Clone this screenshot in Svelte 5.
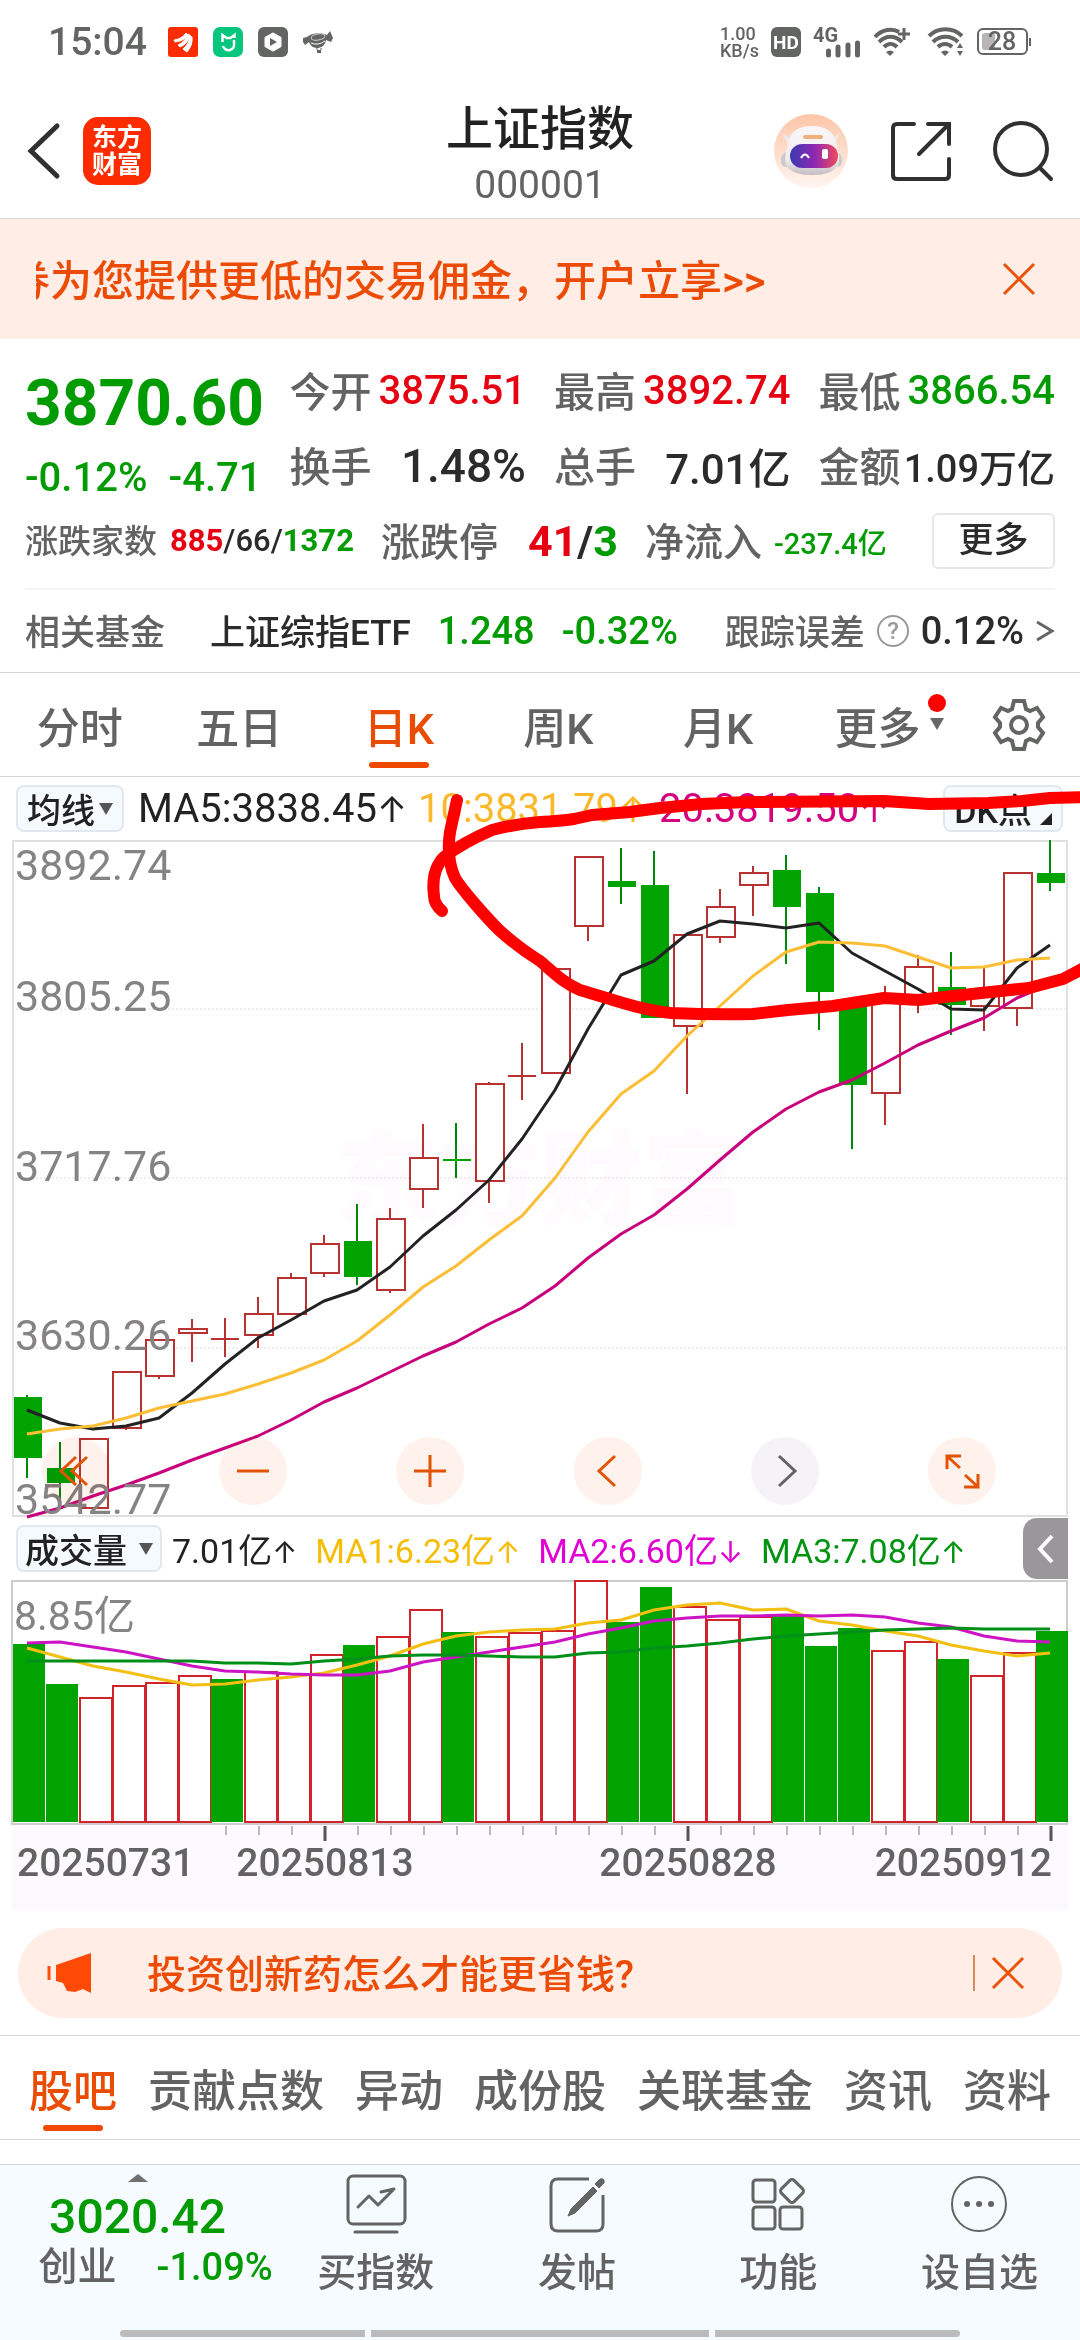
<script>
  const STEP = 33;
  const FIRST = 27;
  const cx = (i) => FIRST + STEP * i;

  // [rising, body top, body bottom, high, low]
  const candles = [
    [0, 1397, 1458, 1395, 1478], [0, 1468, 1483, 1442, 1501], [1, 1439, 1508, 1439, 1508], [1, 1372, 1428, 1372, 1430],
    [1, 1340, 1376, 1340, 1379], [1, 1329, 1333, 1319, 1362], [1, 1339, 1339, 1318, 1357], [1, 1314, 1335, 1297, 1348],
    [1, 1278, 1314, 1273, 1314], [1, 1244, 1273, 1235, 1277], [0, 1241, 1277, 1204, 1285], [1, 1219, 1290, 1208, 1293],
    [1, 1158, 1189, 1124, 1208], [0, 1159, 1159, 1123, 1178], [1, 1084, 1181, 1082, 1203], [1, 1076, 1076, 1043, 1100],
    [1, 969, 1073, 969, 1073], [1, 857, 926, 857, 941], [0, 881, 887, 848, 904], [0, 885, 1018, 851, 1018],
    [1, 935, 1026, 935, 1094], [1, 907, 937, 889, 943], [1, 873, 885, 866, 916], [0, 870, 907, 855, 964],
    [0, 893, 992, 887, 1030], [0, 1003, 1085, 1003, 1149], [1, 1000, 1093, 986, 1125], [1, 967, 998, 955, 1013],
    [0, 987, 1005, 952, 1035], [1, 993, 1006, 967, 1031], [1, 873, 1008, 873, 1026], [0, 873, 883, 840, 891]
  ];
  const ma5 = [1410, 1423, 1429, 1426, 1418, 1393, 1364, 1338, 1320, 1301, 1290, 1267, 1236, 1210, 1180, 1139, 1090, 1029, 975, 961, 934, 921, 924, 928, 923, 953, 971, 989, 1009, 1010, 968, 945];
  const ma10 = [1434, 1429, 1426, 1418, 1408, 1401, 1394, 1384, 1373, 1360, 1341, 1315, 1287, 1266, 1240, 1216, 1178, 1132, 1094, 1071, 1036, 1006, 976, 952, 942, 943, 946, 957, 968, 967, 960, 958];
  const ma20 = [1517, 1508, 1496, 1485, 1473, 1460, 1448, 1436, 1420, 1402, 1388, 1372, 1356, 1342, 1324, 1308, 1286, 1258, 1234, 1215, 1189, 1160, 1132, 1109, 1092, 1080, 1063, 1045, 1031, 1018, 998, 984];

  // [rising, bar top]
  const volumes = [
    [0, 1644], [0, 1684], [1, 1698], [1, 1686], [1, 1683], [1, 1676], [0, 1679], [1, 1672],
    [1, 1674], [1, 1655], [0, 1645], [1, 1637], [1, 1610], [0, 1632], [1, 1637], [1, 1633],
    [1, 1631], [1, 1581], [0, 1622], [0, 1587], [1, 1607], [1, 1620], [1, 1617], [0, 1615],
    [0, 1646], [0, 1628], [1, 1651], [1, 1642], [0, 1659], [1, 1676], [1, 1653], [0, 1631]
  ];
  const vma1 = [1648, 1657, 1666, 1672, 1679, 1685, 1684, 1680, 1677, 1673, 1665, 1656, 1644, 1636, 1632, 1630, 1629, 1623, 1620, 1610, 1605, 1603, 1610, 1609, 1621, 1625, 1631, 1636, 1645, 1651, 1656, 1653];
  const vma2 = [1643, 1642, 1647, 1652, 1659, 1666, 1671, 1672, 1674, 1675, 1675, 1671, 1662, 1657, 1652, 1647, 1642, 1634, 1628, 1621, 1618, 1616, 1616, 1615, 1616, 1615, 1617, 1623, 1627, 1636, 1641, 1642];
  const vma3 = [1661, 1661, 1661, 1661, 1661, 1661, 1663, 1663, 1664, 1661, 1659, 1656, 1655, 1655, 1656, 1657, 1657, 1653, 1652, 1648, 1646, 1643, 1639, 1636, 1634, 1632, 1630, 1629, 1628, 1629, 1629, 1629];

  const points = (series) => series.map((y, i) => `${cx(i)},${y}`).join(' ');

  const prices = [['3892.74', 880], ['3805.25', 1011], ['3717.76', 1181], ['3630.26', 1350], ['3542.77', 1514]];
  const ticks = Array.from({ length: 26 }, (_, k) => k + 6);
  const majors = [9, 20, 31];
  const periods = ['分时', '五日', '日K', '周K', '月K', '更多'];
  const sections = ['股吧', '贡献点数', '异动', '成份股', '关联基金', '资讯', '资料'];
</script>

<div class="page">
  <div class="status">
    <div class="side">
      <span class="clock">15:04</span>
      <svg class="app" viewBox="0 0 30 30"><rect width="30" height="30" rx="3" fill="#fc2d05" /><path d="M6 13Q14 12 18 6l2 2Q16 14 7 15zM10 18Q18 14 20 7l2 1Q20 17 12 20zM15 22Q21 17 22 9l2 1Q25 18 19 25z" fill="#fff" stroke="#fff" stroke-linejoin="round" /></svg>
      <svg class="app" viewBox="0 0 30 30"><rect width="30" height="30" rx="7" fill="#06c57c" /><path d="M9.500 15V8l4 3h4l4-3v3M21 13v3a5 5 0 0 1-11 3" fill="none" stroke="#fff" stroke-width="2.500" /></svg>
      <svg class="app" viewBox="0 0 30 30"><rect width="30" height="30" rx="6" fill="#636563" /><path d="M15 7l7 4v8l-7 4-7-4v-8z" fill="#fff" stroke="#fff" stroke-width="3" stroke-linejoin="round" /><path d="M12 11l7 4-7 4z" fill="#636563" /></svg>
      <svg class="app" viewBox="0 0 30 30"><path d="M0 11l4-1c4-4 14-5 20-2l3-4 3 7-2 4-5-2c-1 6-5 8-9 8s-7-3-8-6l-4 3-2-3z" fill="#636563" /><ellipse cx="15" cy="10" rx="7" ry="3" fill="none" stroke="#ccc" transform="rotate(-10 15 10)" /><path d="M8 16q7 3 14-2" stroke="#fff" fill="none" /><path d="M14 21v2M18 21v2" stroke="#636563" /><rect x="14" y="23" width="4" height="3" fill="#636563" /></svg>
    </div>
    <div class="side right">
      <span class="speed">1.00<br />KB/s</span>
      <svg class="app hd" viewBox="0 0 30 30"><rect width="30" height="30" rx="6" fill="#636563" /><text x="15" y="22" text-anchor="middle">HD</text></svg>
      <svg class="cell" viewBox="0 0 48 30"><text x="0" y="15">4G</text><path d="M15.500 24v4M25 20v8M35 18v10M44.500 16v12" stroke="#636563" stroke-width="5" stroke-linecap="round" /></svg>
      <svg class="wifi" viewBox="0 0 38 30"><g fill="none" stroke="#636563" stroke-width="4"><path d="M2 10C9 2 20 1 26 5" /><path d="M6 15c7-7 16-7 23 0M11 20c4-4 9-4 13 0" /></g><path d="M13 25q4-3 8 0l-4 4z" fill="#636563" /><path d="M31 1v12M25 7h12" stroke="#636563" stroke-width="3" /></svg>
      <svg class="wifi" viewBox="0 0 38 30"><g fill="none" stroke="#636563" stroke-width="4"><path d="M2 9c9-9 24-9 33 0M6 15c7-7 18-7 25 0M11 20c4-4 10-4 14 0" /></g><path d="M14 25q4-3 8 0l-4 4zM30 21l3-5 3 5zM30 24l3 5 3-5z" fill="#636563" /></svg>
      <svg class="battery" viewBox="0 0 55 28"><rect x="1" y="1" width="49" height="25" rx="5" fill="none" stroke="#636563" stroke-width="2" /><rect x="5" y="5" width="13" height="17" rx="3" fill="#b8b4b8" /><path d="M53 10v8" stroke="#636563" stroke-width="2" /><text x="25" y="22" text-anchor="middle">28</text></svg>
    </div>
  </div>

  <header class="header">
    <div class="lead">
      <button class="plain" aria-label="返回"><svg class="back" viewBox="0 0 34 56"><path d="M30 3L4 28l26 25" fill="none" stroke="#303030" stroke-width="5" stroke-linecap="round" /></svg></button>
      <div class="brand">东方<br />财富</div>
    </div>
    <div class="title"><h1>上证指数</h1><span>000001</span></div>
    <div class="tools">
      <button class="plain" aria-label="助手">
        <svg class="robot" viewBox="0 0 76 76">
          <defs>
            <linearGradient id="halo" x2="0" y2="1"><stop offset="0" stop-color="#fdc5a8" /><stop offset="1" stop-color="#fff5f0" /></linearGradient>
            <linearGradient id="visor"><stop offset="0" stop-color="#3b3bb0" /><stop offset=".5" stop-color="#8d27b4" /><stop offset="1" stop-color="#f24a5c" /></linearGradient>
            <linearGradient id="shell" x2="0" y2="1"><stop offset="0" stop-color="#faf7f8" /><stop offset=".7" stop-color="#efebee" /><stop offset="1" stop-color="#c4bdc4" /></linearGradient>
          </defs>
          <circle cx="38" cy="38" r="37" fill="url(#halo)" />
          <path d="M16 38q-7 1-8 8-1 8 6 8h8zM61 38q7 1 8 8 1 8-6 8h-8z" fill="#cfc9ce" />
          <path d="M9 20l4 8q3 5 9 0zM67 20l-4 8q-3 5-9 0z" fill="#eee9ec" />
          <path d="M14 36q1-23 25-23t25 23q4 8 1 16-5 10-26 10-21 0-26-10-2-8 1-16z" fill="url(#shell)" />
          <rect x="17" y="31" width="48" height="24" rx="12" fill="url(#visor)" />
          <rect x="30" y="22" width="20" height="4" rx="2" fill="#f0b07c" />
          <path d="M28 45q4-7 8 0" fill="none" stroke="#fff" stroke-width="2" /><rect x="49" y="36" width="6" height="10" rx="2" fill="#fff" />
        </svg>
      </button>
      <button class="plain" aria-label="分享"><svg class="share" viewBox="0 0 60 60"><g fill="none" stroke="#303030" stroke-width="4" stroke-linecap="round"><path d="M23 3H6q-4 0-4 4v47q0 4 4 4h48q4 0 4-4V38" /><path d="M37 3h21v20M57 4L28 33" /></g></svg></button>
      <button class="plain" aria-label="搜索"><svg class="share" viewBox="0 0 60 60"><g fill="none" stroke="#303030" stroke-width="4" stroke-linecap="round"><circle cx="28" cy="28" r="26" /><path d="M47 47l11 11" /></g></svg></button>
    </div>
  </header>

  <div class="promo">
    <div class="ticker"><a class="lift" href="#open">券为您提供更低的交易佣金，开户立享&gt;&gt;</a></div>
    <button class="plain" aria-label="关闭"><svg class="cross" viewBox="0 0 34 34"><path d="M2 2l30 30M32 2L2 32" stroke="#e85209" stroke-width="3" /></svg></button>
  </div>

  <section class="quote">
    <div class="stats">
      <div class="price"><strong>3870.60</strong><div><span>-0.12%</span><span>-4.71</span></div></div>
      <div class="col"><div><span class="lift">今开</span><b class="up">3875.51</b></div><div><span class="lift">换手</span><b class="large">1.48%</b></div></div>
      <div class="col"><div><span class="lift">最高</span><b class="up">3892.74</b></div><div><span class="lift">总手</span><b class="big">7.01亿</b></div></div>
      <div class="col"><div><span class="lift">最低</span><b class="down">3866.54</b></div><div><span class="lift">金额</span><b class="small">1.09万亿</b></div></div>
    </div>
    <div class="breadth">
      <div class="pair one"><span class="lift">涨跌家数</span><b><i class="up">885</i>/66/<i class="down">1372</i></b></div>
      <div class="pair two"><span class="lift">涨跌停</span><b><i class="up">41</i>/<i class="down">3</i></b></div>
      <div class="pair three"><span class="lift">净流入</span><b class="down">-237.4亿</b></div>
      <button class="more">更多</button>
    </div>
    <div class="fund">
      <span class="dim lift">相关基金</span>
      <span class="name lift">上证综指ETF</span>
      <span class="num down">1.248</span>
      <span class="num down">-0.32%</span>
      <span class="err"><span class="dim lift">跟踪误差</span><svg class="help" viewBox="0 0 34 34"><circle cx="17" cy="17" r="15" fill="none" stroke="#999" stroke-width="2" /><text x="17" y="25" text-anchor="middle">?</text></svg><span class="num">0.12%</span><svg class="chev" viewBox="0 0 20 24"><path d="M2 3l15 9-15 9" fill="none" stroke="#666" stroke-width="3" /></svg></span>
    </div>
  </section>

  <nav class="periods">
    {#each periods as p}
      <button class="plain" class:active={p === '日K'}><span class="lab">{p}{#if p === '更多'}<svg class="flag" viewBox="0 0 20 40"><circle cx="10" cy="9" r="9" fill="#fe0000" /><path d="M3 24h14l-7 12z" fill="#666" /></svg>{/if}</span></button>
    {/each}
    <button class="plain gearbox" aria-label="设置"><svg class="gear" viewBox="0 0 52 52"><g fill="none" stroke="#636563" stroke-width="4"><path d="M21 2h10l2 8 4 2 7-3 6 9-5 6v4l5 6-6 9-7-3-4 2-2 8H21l-2-8-4-2-7 3-6-9 5-6v-4l-5-6 6-9 7 3 4-2z" /><circle cx="26" cy="26" r="8" /></g></svg></button>
  </nav>

  <section class="market">
    <div class="legend">
      <button class="chip">均线<svg class="tri" viewBox="0 0 14 12"><path d="M0 0h14L7 12z" fill="#555" /></svg></button>
      <span class="ink first">MA5:3838.45<i class="arrow">↑</i></span>
      <span class="amber">10:3831.79<i class="arrow">↑</i></span>
      <span class="pink">20:3819.50<i class="arrow">↑</i></span>
      <button class="chip dk">DK点<svg class="corner" viewBox="0 0 12 12"><path d="M12 0v12H0z" fill="#222" /></svg></button>
    </div>
    <div class="kline">
      <svg class="plot" viewBox="12 840 1056 677">
        <text class="mark" x="540" y="1217" text-anchor="middle">东方财富</text>
        <path d="M13 841H1067V1516H13z" fill="none" stroke="#e0e0e2" stroke-width="2" />
        <path d="M12 1009H1068M12 1178H1068M12 1348H1068" stroke="#dcdcdc" stroke-width="1" stroke-dasharray="2 2" />
        {#each candles as [up, top, bottom, high, low], i}
          {#if up}
            <path d="M{cx(i)} {high}V{top}M{cx(i)} {bottom}V{low}" stroke="#b83232" stroke-width="2" />
            {#if top === bottom}
              <path d="M{cx(i) - 14} {top}h28M{cx(i)} {high}V{low}" stroke="#b83232" stroke-width="2" />
            {:else}
              <rect x={cx(i) - 13} y={top} width="28" height={bottom - top} fill="#fff" stroke="#b83232" stroke-width="2" />
            {/if}
          {:else}
            <path d="M{cx(i)} {high}V{low}" stroke="#008a0a" stroke-width="2" />
            <rect x={cx(i) - 13} y={top} width="28" height={Math.max(bottom - top, 2)} fill="#00a300" />
          {/if}
        {/each}
        <polyline points={points(ma5)} stroke="#222" />
        <polyline points={points(ma10)} stroke="#fbbe35" />
        <polyline points={points(ma20)} stroke="#c9007b" />
        {#each prices as [label, y]}<text class="axis" x="15" {y}>{label}</text>{/each}
      </svg>
      <div class="controls">
        <button aria-label="最早"><svg viewBox="0 0 68 68"><path d="M34 20L19 34l15 14M45 20L30 34l15 14" /></svg></button>
        <button aria-label="缩小"><svg viewBox="0 0 68 68"><path d="M18 34h32" /></svg></button>
        <button aria-label="放大"><svg viewBox="0 0 68 68"><path d="M18 34h32M34 18v32" /></svg></button>
        <button aria-label="向前"><svg viewBox="0 0 68 68"><path d="M41 19L25 34l16 15" /></svg></button>
        <button class="off" aria-label="向后"><svg viewBox="0 0 68 68"><path d="M28 19l16 15-16 15" /></svg></button>
        <button aria-label="全屏"><svg viewBox="0 0 68 68"><path d="M19 32V19h14M20 20l12 11M50 37v13H36M49 49L37 38" /></svg></button>
      </div>
    </div>
    <div class="legend vol">
      <button class="chip wide">成交量<svg class="tri" viewBox="0 0 14 12"><path d="M0 0h14L7 12z" fill="#555" /></svg></button>
      <span class="ink">7.01亿<i class="arrow">↑</i></span>
      <span class="gold">MA1:6.23亿<i class="arrow">↑</i></span>
      <span class="violet">MA2:6.60亿<i class="arrow">↓</i></span>
      <span class="leaf">MA3:7.08亿<i class="arrow">↑</i></span>
      <button class="drawer" aria-label="展开"><svg viewBox="0 0 45 61"><path d="M29 18L17 31l12 13" fill="none" stroke="#fff" stroke-width="4" /></svg></button>
    </div>
    <div class="volume">
      <svg class="plot" viewBox="12 1580 1056 330">
        <rect x="12" y="1825" width="1056" height="85" fill="#fdfaff" />
        <path d="M12 1581H1067V1824H12z" fill="none" stroke="#ccc" stroke-width="2" />
        <text class="axis unit" x="14" y="1630">8.85亿</text>
        {#each volumes as [up, top], i}
          {#if up}
            <rect x={cx(i) - 13} y={top} width="32" height={1822 - top} fill="#fff" stroke="#d2232a" stroke-width="2" />
          {:else}
            <rect x={cx(i) - 14} y={top} width="32" height={1822 - top} fill="#00a300" />
          {/if}
        {/each}
        <polyline points={points(vma1)} stroke="#f2bf12" />
        <polyline points={points(vma2)} stroke="#cc14c4" />
        <polyline points={points(vma3)} stroke="#008f18" />
        {#each ticks as t}<path d="M{cx(t) + 1} 1826v9" stroke="#777" stroke-width="1" />{/each}
        {#each majors as t}<path d="M{cx(t) + 1} 1826v15" stroke="#555" stroke-width="3" />{/each}
        <text class="date" x="17" y="1876">20250731</text>
        <text class="date" x="325" y="1876" text-anchor="middle">20250813</text>
        <text class="date" x="688" y="1876" text-anchor="middle">20250828</text>
        <text class="date" x="1052" y="1876" text-anchor="end">20250912</text>
      </svg>
    </div>
    <svg class="doodle" viewBox="0 777 1080 740">
      <g fill="none" stroke="#fe0000" stroke-width="12" stroke-linecap="round" stroke-linejoin="round">
        <path d="M457 800L450 832Q446 858 455 878C462 890 487 918 499 930Q519 948 540 961C552 971 563 983 580 990Q600 996 623 1003Q650 1011 671 1013Q715 1015 753 1014L788 1010L833 1006L884 998L919 1000L953 996L1029 988L1063 979L1086 967" />
        <path d="M442 911Q434 904 434 896C432 880 435 866 444 857Q464 842 492 830Q515 824 540 822Q560 821 574 819L592 815L630 812L660 808L702 804L747 802L884 801L929 804L988 803L1022 801L1050 798L1086 797" />
      </g>
    </svg>
  </section>

  <div class="notice">
    <svg class="horn" viewBox="0 0 46 40"><path d="M2 13v14" stroke="#ff4d0a" stroke-width="3" /><path d="M9 12L44 0v40l-8-4-8 3-8-1-4-8-7-2z" fill="#ff4a05" /></svg>
    <a class="lift" href="#notice">投资创新药怎么才能更省钱?</a>
    <span class="bar"></span>
    <button class="plain" aria-label="关闭"><svg class="cross" viewBox="0 0 34 34"><path d="M2 2l30 30M32 2L2 32" stroke="#e85209" stroke-width="3" /></svg></button>
  </div>

  <nav class="sections">
    {#each sections as s, i}<button class="plain" class:active={i === 0}>{s}</button>{/each}
  </nav>

  <footer class="dock">
    <div class="actions">
      <div class="index">
        <svg class="caret" viewBox="0 0 20 8"><path d="M10 0l10 8H0z" fill="#707070" /></svg>
        <strong>3020.42</strong>
        <div><span>创业</span><b>-1.09%</b></div>
      </div>
      <button class="plain"><svg viewBox="0 0 60 60"><g fill="none" stroke="#636563" stroke-width="3" stroke-linecap="round" stroke-linejoin="round"><rect x="2" y="2" width="57" height="48" rx="5" /><path d="M9 58h42M12 33l11-11 9 9 15-15M35 18l13-3" /></g></svg>买指数</button>
      <button class="plain"><svg viewBox="0 0 60 60"><path d="M42 5H11q-7 0-7 7v38q0 7 7 7h38q7 0 7-7V21" fill="none" stroke="#636563" stroke-width="3" /><path d="M46 13l4 4-22 22-7 3 3-7zM48 10l5-5q5-1 4 4l-5 5z" fill="#636563" stroke="#636563" /></svg>发帖</button>
      <button class="plain"><svg viewBox="0 0 60 60"><g fill="none" stroke="#636563" stroke-width="3"><rect x="5" y="6" width="22" height="22" rx="3" /><rect x="5" y="33" width="22" height="22" rx="3" /><rect x="32" y="33" width="22" height="22" rx="3" /><rect x="35" y="8" width="18" height="18" rx="3" transform="rotate(45 44 17)" /></g></svg>功能</button>
      <button class="plain"><svg viewBox="0 0 60 60"><circle cx="30" cy="30" r="27" fill="none" stroke="#636563" stroke-width="2" /><path d="M18 30h.1M30 30h.1M42 30h.1" stroke="#636563" stroke-width="6" stroke-linecap="round" /></svg>设自选</button>
    </div>
    <div class="home"><span></span><span class="mid"></span><span></span></div>
  </footer>
</div>

<style>
  :global(body) { background: #fff; }
  .page {
    display: flex; flex-direction: column; min-height: 100vh; overflow: hidden;
    background: #fff; color: #2b2b2b;
    font-family: Roboto, "Liberation Sans", "Noto Sans CJK SC", sans-serif; font-weight: 500;
  }
  .page * { box-sizing: border-box; }
  svg { display: block; flex: none; overflow: visible; }
  button { font: inherit; color: inherit; cursor: pointer; }
  .plain { border: 0; padding: 0; background: none; }
  a { color: inherit; text-decoration: none; }
  i { font-style: normal; }
  .up { color: #e60012; }
  .down { color: #009b00; }
  .lift { padding-bottom: 4px; }

  .status { display: flex; justify-content: space-between; align-items: center; height: 84px; padding: 0 48px; color: #636563; }
  .side { display: flex; align-items: center; gap: 15px; }
  .clock { font-size: 39px; margin-right: 6px; }
  .app { width: 30px; height: 30px; }
  .right { gap: 12px; }
  .speed { font-size: 18px; line-height: 17px; }
  .status text { font-family: Roboto, sans-serif; font-weight: 700; }
  .hd text { font-size: 19px; fill: #fff; }
  .cell { width: 48px; height: 30px; }
  .cell text { font-size: 20px; fill: #636563; }
  .wifi { width: 38px; height: 30px; }
  .right .wifi + .wifi { margin-left: 4px; }
  .battery { width: 55px; height: 28px; }
  .battery text { font-size: 25px; font-weight: 500; fill: #636563; }

  .header { display: grid; grid-template-columns: 1fr auto 1fr; align-items: center; height: 135px; padding: 0 27px; border-bottom: 1px solid #d5d5d8; }
  .lead { display: flex; align-items: center; gap: 22px; }
  .back { width: 34px; height: 56px; }
  .brand { width: 68px; padding: 7px 0; border-radius: 15px; background: #fd2c00; color: #fff; text-align: center; font-size: 25px; line-height: 27px; font-weight: 700; }
  .title { display: flex; flex-direction: column; align-items: center; gap: 7px; padding-top: 6px; }
  h1 { margin: 0; font-size: 47px; line-height: 54px; font-weight: 500; color: #222; }
  .title span { font-size: 39px; line-height: 44px; font-weight: 400; color: #636363; }
  .tools { display: flex; justify-content: flex-end; align-items: center; gap: 42px; }
  .robot { width: 76px; height: 76px; }
  .share { width: 60px; height: 60px; }

  .promo { display: flex; align-items: center; justify-content: space-between; height: 120px; padding: 0 44px 0 36px; background: #ffede6; color: #ec4b05; }
  .ticker { flex: 1; overflow: hidden; white-space: nowrap; font-size: 42px; }
  .ticker a { display: block; margin-left: -28px; }
  .cross { width: 34px; height: 34px; }

  .quote { padding: 14px 25px 0; border-bottom: 1px solid #d5d5d5; white-space: nowrap; }
  .stats { display: grid; grid-template-columns: repeat(4, minmax(0, 1fr)); gap: 28px; height: 150px; }
  .price { padding-top: 11px; color: #009b00; }
  .price strong { display: block; font-size: 64px; line-height: 80px; font-weight: 700; }
  .price div { display: flex; justify-content: space-between; font-size: 40px; line-height: 68px; }
  .col { display: flex; flex-direction: column; }
  .col div { display: flex; justify-content: space-between; align-items: center; height: 75px; }
  .col span { font-size: 41px; color: #636363; }
  .col b { font-size: 40px; font-weight: 500; }
  .col .large { font-size: 46px; }
  .col .big { font-size: 42px; }
  .col .small { font-size: 38px; }
  .breadth { display: flex; align-items: center; gap: 27px; height: 75px; }
  .pair { display: flex; align-items: center; justify-content: space-between; }
  .pair span { font-size: 39px; color: #636363; }
  .pair b { font-size: 31px; font-weight: 500; }
  .one { gap: 13px; }
  .one span { font-size: 33px; }
  .one i { font-weight: 700; }
  .two { gap: 30px; }
  .two b { font-size: 43px; font-weight: 700; }
  .three { gap: 12px; }
  .three b { font-size: 29px; }
  .more { margin-left: auto; width: 123px; height: 56px; padding: 0; border: 2px solid #e8e6ea; border-radius: 6px; background: #fff; font-size: 35px; line-height: 48px; }
  .fund { display: flex; align-items: center; gap: 27px; margin-top: 10px; height: 84px; border-top: 2px solid #f4f4f6; font-size: 35px; }
  .dim { color: #636363; }
  .name { margin-left: 18px; }
  .num { font-size: 38px; }
  .err { display: flex; align-items: center; gap: 11px; margin-left: auto; }
  .help { width: 34px; height: 34px; }
  .help text { font-size: 24px; fill: #999; }
  .chev { width: 20px; height: 24px; }

  .periods { display: grid; grid-template-columns: repeat(6, minmax(0, 160fr)) 123fr; height: 104px; border-bottom: 1px solid #d5d5d8; color: #636363; font-size: 43px; }
  .periods .plain { display: flex; justify-content: center; align-items: center; position: relative; }
  .lab { position: relative; }
  .active { color: #e94c05; position: relative; }
  .active::after { content: ""; position: absolute; bottom: 8px; left: 50%; width: 60px; height: 6px; margin-left: -30px; border-radius: 3px; background: #f04a00; }
  .flag { position: absolute; left: 100%; top: 0; width: 20px; height: 40px; margin-left: 6px; }
  .gear { width: 52px; height: 52px; }

  .market { position: relative; }
  .legend { display: flex; align-items: center; gap: 11px; height: 63px; padding: 0 17px 0 16px; font-size: 40px; white-space: nowrap; }
  .legend span { font-weight: 400; }
  .arrow { font-family: Inter, "DejaVu Sans", sans-serif; font-size: 36px; line-height: 36px; }
  .ink { color: #222; }
  .first { margin-left: 3px; }
  .amber { color: #fbb829; }
  .pink { color: #d4007f; }
  .chip { display: flex; align-items: center; justify-content: center; gap: 4px; height: 47px; padding: 0 9px; border: 2px solid #e2e8f0; border-radius: 8px; background: #f5faff; color: #222; font-size: 34px; }
  .tri { width: 14px; height: 12px; }
  .dk { margin-left: auto; gap: 8px; }
  .corner { width: 12px; height: 12px; align-self: flex-end; margin-bottom: 5px; }
  .vol { gap: 18px; padding-right: 12px; font-size: 34px; }
  .vol .arrow { font-size: 30px; }
  .wide { gap: 12px; padding: 0 7px; margin-right: -8px; }
  .gold { color: #f6bd06; }
  .violet { color: #e000d4; }
  .leaf { color: #009310; }
  .drawer { margin-left: auto; width: 45px; padding: 0; border: 0; border-radius: 14px 0 0 14px; background: #9a979b; }
  .drawer svg { width: 45px; height: 61px; }
  .kline { position: relative; margin: 0 12px; }
  .volume { margin: 0 12px; }
  .plot { width: 100%; height: auto; }
  polyline { fill: none; stroke-width: 3; stroke-linejoin: round; }
  .axis { font-size: 43px; font-weight: 400; fill: #858383; }
  .unit { font-size: 41px; }
  .date { font-size: 39px; fill: #636363; }
  .mark { font-size: 102px; font-weight: 900; fill: #fefafe; }
  .controls { position: absolute; left: 30px; right: 72px; bottom: 12px; display: flex; justify-content: space-between; }
  .controls button { position: relative; width: 68px; padding: 0; border: 0; background: none; }
  .controls button::before { content: ""; position: absolute; inset: 0; border-radius: 50%; background: #fff1ec; mix-blend-mode: multiply; }
  .controls svg { position: relative; width: 68px; height: 68px; fill: none; stroke: #e25303; stroke-width: 3; }
  .controls .off::before { background: #f6f3f8; }
  .controls .off svg { stroke: #636363; }
  .doodle { position: absolute; left: 0; top: 0; width: 100%; height: auto; pointer-events: none; }

  .notice { display: flex; align-items: center; height: 90px; margin: 18px 18px 17px; padding: 0 37px 0 29px; border-radius: 45px; background: #ffede6; color: #ec4b05; font-size: 39px; }
  .horn { width: 46px; height: 40px; }
  .notice a { margin-left: 54px; }
  .bar { margin-left: auto; width: 2px; height: 36px; margin-right: 16px; background: #d98a5c; }

  .sections { display: flex; justify-content: space-between; height: 105px; padding: 0 29px; border: solid #d5d5d8; border-width: 1px 0; color: #636363; font-size: 44px; white-space: nowrap; }
  .sections .active { color: #e94c05; }

  .dock { flex: 1; display: flex; flex-direction: column; margin-top: 24px; border-top: 1px solid #d5d5d8; background: #f6fbff; color: #636363; font-size: 39px; white-space: nowrap; }
  .actions { display: grid; grid-template-columns: 275fr repeat(4, 201fr); }
  .actions .plain { display: flex; flex-direction: column; align-items: center; gap: 10px; padding-top: 9px; line-height: 58px; }
  .actions .plain svg { width: 60px; height: 60px; }
  .index { display: flex; flex-direction: column; align-items: center; padding-top: 9px; color: #009b00; }
  .caret { width: 20px; height: 8px; }
  .index strong { font-size: 48px; line-height: 70px; font-weight: 500; }
  .index div { display: flex; align-items: center; gap: 40px; padding-left: 36px; line-height: 30px; }
  .index div span { color: #636363; }
  .index b { font-size: 38px; font-weight: 500; }
  .home { display: flex; gap: 6px; margin: auto 120px 3px; }
  .home span { flex: 246; height: 7px; background: #bbb; }
  .home .mid { flex: 338; }
  .home span:first-child { border-radius: 4px 0 0 4px; }
  .home span:last-child { border-radius: 0 4px 4px 0; }
</style>
